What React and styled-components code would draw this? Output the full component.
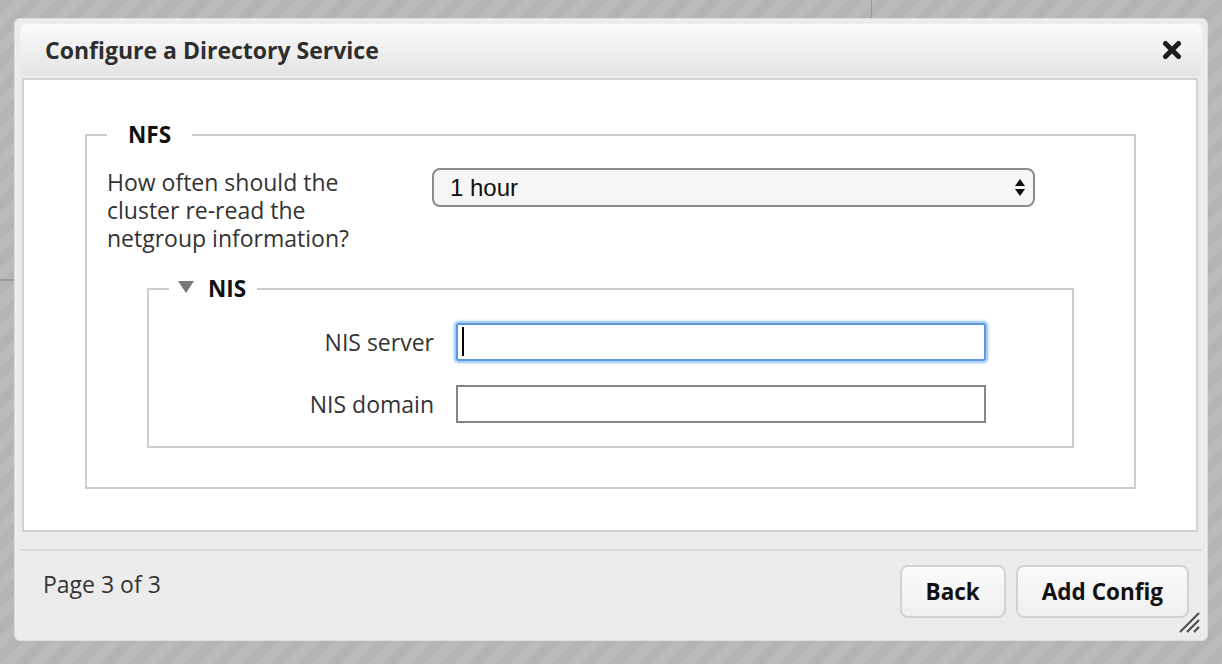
import React from "react";
import styled, { createGlobalStyle } from "styled-components";

const GlobalStyle = createGlobalStyle`
  html, body {
    margin: 0;
    padding: 0;
  }
  body {
    font-family: "Open Sans", "DejaVu Sans", sans-serif;
    color: #333;
  }
`;

const Page = styled.div`
  box-sizing: border-box;
  width: 1222px;
  min-height: 664px;
  padding: 18px 14px 0 14px;
  background-color: #b7b7b7;
  background-image:
    linear-gradient(#9a9a9a, #9a9a9a),
    linear-gradient(#9a9a9a, #9a9a9a),
    repeating-linear-gradient(135deg, #b4b4b4 0 10px, #bbbbbb 10px 20px);
  background-size: 1px 18px, 14px 2px, auto;
  background-position: 871px 0, 0 279px, 0 0;
  background-repeat: no-repeat, no-repeat, repeat;
`;

const Dialog = styled.div`
  position: relative;
  box-sizing: border-box;
  width: 1194px;
  display: flex;
  flex-direction: column;
  padding: 5px 5px 0 5px;
  background: #ececec;
  border: 1px solid #dedede;
  border-radius: 6px;
`;

const Header = styled.div`
  height: 52px;
  display: flex;
  align-items: center;
  justify-content: space-between;
  padding: 0 19px 0 25px;
  border-radius: 6px;
  background: linear-gradient(#fbfbfb, #e4e4e4);
`;

const Title = styled.h1`
  margin: 0;
  font-size: 23px;
  font-weight: 700;
  color: #2e2e2e;
  line-height: 30px;
`;

const CloseButton = styled.button`
  width: 22px;
  height: 22px;
  padding: 0;
  border: 0;
  background: none;
  display: flex;
  align-items: center;
  justify-content: center;
  cursor: pointer;
`;

const Content = styled.div`
  margin: 2px 4px 0 2px;
  padding: 40px 60px 41px 61px;
  background: #fff;
  border: 2px solid #d2d2d2;
`;

const Fieldset = styled.fieldset`
  margin: ${(p) => (p.$nested ? "22px 0 0 40px" : "0")};
  padding: ${(p) => (p.$nested ? "19px 0 23px 20px" : "18px 60px 39px 20px")};
  border: 2px solid #cdcdcd;
  min-width: 0;
`;

const Legend = styled.legend`
  display: flex;
  align-items: center;
  gap: 14px;
  padding: ${(p) => (p.$toggle ? "0 11px 0 9px" : "0 21px")};
  font-size: 22.5px;
  font-weight: 700;
  line-height: 30px;
  color: #111;
`;

const Triangle = styled.span`
  width: 0;
  height: 0;
  border-left: 8px solid transparent;
  border-right: 8px solid transparent;
  border-top: 12px solid #777;
  margin-top: -4px;
`;

const QuestionRow = styled.div`
  display: grid;
  grid-template-columns: 325px 603px;
  align-items: start;
`;

const Question = styled.label`
  width: 285px;
  font-size: 23px;
  line-height: 28px;
  color: #333;
`;

const SelectWrap = styled.div`
  position: relative;
  height: 39px;
`;

const Select = styled.select`
  appearance: none;
  box-sizing: border-box;
  width: 100%;
  height: 39px;
  padding: 0 30px 0 16px;
  border: 2px solid #8c8c8c;
  border-radius: 8px;
  background: #f6f6f6;
  font-family: "Liberation Sans Narrow", "Liberation Sans", Arial, sans-serif;
  font-size: 24px;
  color: #111;
  outline: none;
`;

const Arrows = styled.svg`
  position: absolute;
  right: 9px;
  top: 10px;
  pointer-events: none;
`;

const FieldRow = styled.div`
  display: grid;
  grid-template-columns: 265px 530px;
  column-gap: 22px;
  align-items: center;
  & + & {
    margin-top: 24px;
  }
`;

const FieldLabel = styled.label`
  text-align: right;
  font-size: 23px;
  line-height: 30px;
  color: #333;
`;

const InputWrap = styled.div`
  position: relative;
`;

const TextInput = styled.input`
  box-sizing: border-box;
  display: block;
  width: 530px;
  height: 38px;
  padding: 0 6px;
  font-size: 20px;
  background: #fff;
  border: 2px solid ${(p) => (p.$focused ? "#5b98e0" : "#858585")};
  border-radius: ${(p) => (p.$focused ? "3px" : "0")};
  box-shadow: ${(p) =>
    p.$focused ? "0 0 0 2px #acd0f7, 0 0 2px 3px #d4e6fb" : "none"};
  outline: none;
`;

const Caret = styled.span`
  position: absolute;
  left: 6px;
  top: 4px;
  width: 2px;
  height: 29px;
  background: #000;
`;

const Footer = styled.div`
  margin-top: 17px;
  border-top: 2px solid #d9d9d9;
  padding: 14px 13px 22px 23px;
  display: flex;
  justify-content: space-between;
  align-items: flex-start;
`;

const PageInfo = styled.div`
  margin-top: 4px;
  font-size: 23px;
  line-height: 30px;
  color: #333;
`;

const Buttons = styled.div`
  display: flex;
  gap: 10px;
`;

const Button = styled.button`
  height: 53px;
  padding: 0 24px;
  border: 2px solid #d2d2d2;
  border-radius: 8px;
  background: linear-gradient(#fbfbfb, #efefef);
  font-family: "Open Sans", "DejaVu Sans", sans-serif;
  font-size: 22.5px;
  font-weight: 700;
  color: #111;
  cursor: pointer;
`;

const Grip = styled.svg`
  position: absolute;
  right: 7px;
  bottom: 7px;
`;

export default function App() {
  return (
    <>
      <GlobalStyle />
      <Page>
        <Dialog>
          <Header>
            <Title>Configure a Directory Service</Title>
            <CloseButton aria-label="Close">
              <svg width="20" height="20" viewBox="0 0 20 20">
                <path
                  d="M3.5 3.5 L16.5 16.5 M16.5 3.5 L3.5 16.5"
                  stroke="#1c1c1c"
                  strokeWidth="5"
                  strokeLinecap="round"
                />
              </svg>
            </CloseButton>
          </Header>

          <Content>
            <Fieldset>
              <Legend>NFS</Legend>
              <QuestionRow>
                <Question htmlFor="refresh">
                  How often should the cluster re-read the netgroup information?
                </Question>
                <SelectWrap>
                  <Select id="refresh" defaultValue="1h">
                    <option value="1h">1 hour</option>
                    <option value="6h">6 hours</option>
                    <option value="1d">1 day</option>
                  </Select>
                  <Arrows width="12" height="19" viewBox="0 0 12 19">
                    <path d="M6 1 L11 8 L1 8 Z" fill="#111" />
                    <path d="M6 18 L11 11 L1 11 Z" fill="#111" />
                  </Arrows>
                </SelectWrap>
              </QuestionRow>

              <Fieldset $nested>
                <Legend $toggle>
                  <Triangle />
                  NIS
                </Legend>
                <FieldRow>
                  <FieldLabel htmlFor="nis-server">NIS server</FieldLabel>
                  <InputWrap>
                    <TextInput id="nis-server" $focused />
                    <Caret />
                  </InputWrap>
                </FieldRow>
                <FieldRow>
                  <FieldLabel htmlFor="nis-domain">NIS domain</FieldLabel>
                  <InputWrap>
                    <TextInput id="nis-domain" />
                  </InputWrap>
                </FieldRow>
              </Fieldset>
            </Fieldset>
          </Content>

          <Footer>
            <PageInfo>Page 3 of 3</PageInfo>
            <Buttons>
              <Button>Back</Button>
              <Button>Add Config</Button>
            </Buttons>
          </Footer>

          <Grip width="22" height="22" viewBox="0 0 22 22">
            <path
              d="M2 21 L21 2 M9 21 L21 9 M16 21 L21 16"
              stroke="#4a4a4a"
              strokeWidth="2"
            />
          </Grip>
        </Dialog>
      </Page>
    </>
  );
}
